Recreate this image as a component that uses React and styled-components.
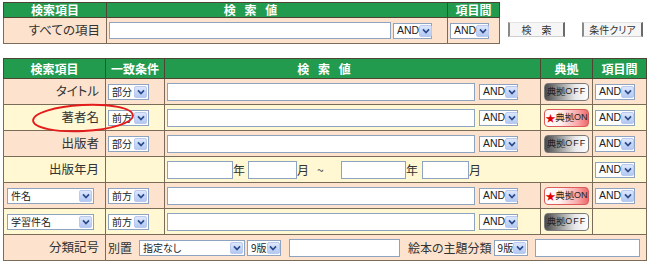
import React from 'react';
import styled, { createGlobalStyle } from 'styled-components';

const GlobalStyle = createGlobalStyle`
  html, body {
    margin: 0;
    padding: 0;
    background: #fff;
  }
  body {
    font-family: "Noto Sans CJK JP", "Liberation Sans", sans-serif;
    font-feature-settings: "palt";
    color: #333;
  }
`;

const Page = styled.div`
  position: relative;
  width: 650px;
  padding: 2px 0 0 3px;
  box-sizing: border-box;
`;

const TopRow = styled.div`
  display: flex;
  align-items: flex-start;
  margin-bottom: 14px;
`;

const Buttons = styled.div`
  display: flex;
  gap: 17px;
  margin: 20px 0 0 8px;
`;

const FlatButton = styled.div`
  width: ${p => p.$w}px;
  height: 15px;
  box-sizing: border-box;
  display: flex;
  align-items: center;
  justify-content: center;
  background: #f6f6f6;
  border-left: 2px solid #8a8a8a;
  border-right: 2px solid #6a6a6a;
  border-top: 1px solid #e4e4e4;
  border-bottom: 1px solid #cfcfcf;
  font-size: 10px;
  color: #333;
  white-space: pre;
  letter-spacing: ${p => p.$ls || 0}px;
  text-indent: ${p => p.$ls || 0}px;
`;

const Table = styled.table`
  border-collapse: collapse;
  table-layout: fixed;
  width: ${p => p.$w}px;
  border: 1px solid #4e4434;
`;

const Col = styled.col`
  width: ${p => p.$w}px;
`;

const Head = styled.th`
  background: #239b4f;
  color: #fff;
  font-size: 12px;
  font-weight: bold;
  height: ${p => p.$h}px;
  padding: 0 ${p => p.$pr || 0}px 0 0;
  border: 1px solid #4e4434;
  text-align: center;
  letter-spacing: ${p => p.$ls || 0}px;
  white-space: pre;
  line-height: 1;
`;

const Cell = styled.td`
  background: ${p => (p.$alt ? '#fff8d3' : '#fde3cd')};
  border: 1px solid #7a6c58;
  height: ${p => p.$h || 25}px;
  padding: 0;
  vertical-align: middle;
`;

const Label = styled.div`
  text-align: right;
  padding-right: 6px;
  font-size: 12.5px;
  color: #333;
  line-height: 1;
  white-space: nowrap;
`;

const Line = styled.div`
  display: flex;
  align-items: center;
  gap: ${p => p.$gap ?? 4}px;
  padding-left: ${p => p.$pl ?? 2}px;
`;

const CenterLine = styled.div`
  display: flex;
  align-items: center;
  justify-content: center;
`;

const TextBox = styled.input`
  width: ${p => p.$w}px;
  height: ${p => p.$h || 18}px;
  box-sizing: border-box;
  border: 1px solid #8ea3c0;
  background: #fff;
  margin: 0;
  padding: 0;
  outline: none;
  flex-shrink: 0;
`;

const Unit = styled.span`
  font-size: 12px;
  color: #333;
  margin: ${p => p.$m || '0'};
  width: ${p => (p.$w ? `${p.$w}px` : 'auto')};
  line-height: 1;
  white-space: nowrap;
  flex-shrink: 0;
`;

const SelectBox = styled.div`
  width: ${p => p.$w}px;
  height: 16px;
  box-sizing: border-box;
  display: flex;
  align-items: center;
  justify-content: space-between;
  border: 1px solid #8ea3c0;
  background: #fff;
  padding: 0 1px 0 3px;
  flex-shrink: 0;
  margin: ${p => p.$m || '0'};
`;

const SelectText = styled.span`
  font-family: ${p => (p.$latin ? '"Liberation Sans", Arial, sans-serif' : '"Noto Sans CJK JP", sans-serif')};
  font-size: ${p => (p.$latin ? 10.5 : 10)}px;
  color: #222;
  line-height: 1;
  white-space: nowrap;
`;

const ArrowBtn = styled.span`
  width: 13px;
  height: 12px;
  box-sizing: border-box;
  display: flex;
  align-items: center;
  justify-content: center;
  border: 1px solid #b9caee;
  border-radius: 2px;
  background: linear-gradient(#dde7fc, #b3c8f2);
  flex-shrink: 0;
`;

const Authority = styled.div`
  width: 45px;
  height: 18px;
  box-sizing: border-box;
  border-radius: 4px;
  display: flex;
  align-items: center;
  justify-content: center;
  font-size: 9.5px;
  line-height: 1;
  color: #222;
  white-space: nowrap;
  letter-spacing: -0.2px;
  border: 1px solid ${p => (p.$on ? '#dc5a5a' : '#7a7a7a')};
  background: ${p =>
    p.$on
      ? 'linear-gradient(90deg, #ffffff 0%, #fff0f0 35%, #f9a9a9 75%, #ee6a6a 100%)'
      : 'linear-gradient(90deg, #4a4a4a 0%, #9a9a9a 35%, #e8e8e8 70%, #ffffff 100%)'};
`;

const Latin = styled.span`
  font-family: "Liberation Sans", Arial, sans-serif;
  font-size: 9px;
  letter-spacing: ${p => p.$ls || 0}px;
`;

const Star = styled.span`
  color: #e00000;
  font-size: 10px;
`;

const Ellipse = styled.svg`
  position: absolute;
  left: 31px;
  top: 102px;
  pointer-events: none;
`;

const Chevron = () => (
  <svg width="8" height="6" viewBox="0 0 8 6">
    <path d="M1 1.3 L4 4.5 L7 1.3" fill="none" stroke="#2b4b8c" strokeWidth="1.7" />
  </svg>
);

const Select = ({ w, latin, m, children }) => (
  <SelectBox $w={w} $m={m}>
    <SelectText $latin={latin}>{children}</SelectText>
    <ArrowBtn>
      <Chevron />
    </ArrowBtn>
  </SelectBox>
);

const AuthorityButton = ({ on }) =>
  on ? (
    <Authority $on>
      <Star>★</Star>典拠<Latin>ON</Latin>
    </Authority>
  ) : (
    <Authority>
      典拠<Latin $ls={1}>OFF</Latin>
    </Authority>
  );

const fieldRows = [
  { label: 'タイトル', match: '部分', on: false },
  { label: '著者名', match: '前方', on: true },
  { label: '出版者', match: '部分', on: false },
];

const subjectRows = [
  { field: '件名', match: '前方', on: true, alt: false, andOp: true },
  { field: '学習件名', match: '前方', on: false, alt: true, andOp: false },
];

export default function App() {
  return (
    <Page>
      <GlobalStyle />
      <TopRow>
        <Table $w={496}>
          <colgroup>
            <Col $w={103} />
            <Col $w={341} />
            <Col $w={52} />
          </colgroup>
          <thead>
            <tr>
              <Head $h={14}>検索項目</Head>
              <Head $h={14} $ls={3} $pr={50}>検 索 値</Head>
              <Head $h={14}>項目間</Head>
            </tr>
          </thead>
          <tbody>
            <tr>
              <Cell $h={25}>
                <Label>すべての項目</Label>
              </Cell>
              <Cell>
                <Line $pl={2} $gap={2}>
                  <TextBox $w={282} $h={17} readOnly />
                  <Select w={39} latin>AND</Select>
                </Line>
              </Cell>
              <Cell>
                <Line $pl={2}>
                  <Select w={39} latin>AND</Select>
                </Line>
              </Cell>
            </tr>
          </tbody>
        </Table>
        <Buttons>
          <FlatButton $w={57} $ls={4}>検 索</FlatButton>
          <FlatButton $w={61}>条件クリア</FlatButton>
        </Buttons>
      </TopRow>

      <Table $w={643}>
        <colgroup>
          <Col $w={102} />
          <Col $w={59} />
          <Col $w={376} />
          <Col $w={52} />
          <Col $w={54} />
        </colgroup>
        <thead>
          <tr>
            <Head $h={19}>検索項目</Head>
            <Head $h={19}>一致条件</Head>
            <Head $h={19} $ls={3} $pr={54}>検 索 値</Head>
            <Head $h={19}>典拠</Head>
            <Head $h={19}>項目間</Head>
          </tr>
        </thead>
        <tbody>
          {fieldRows.map((r, i) => (
            <tr key={r.label}>
              <Cell $alt={i % 2 === 1}>
                <Label>{r.label}</Label>
              </Cell>
              <Cell $alt={i % 2 === 1}>
                <Line $pl={2}>
                  <Select w={41}>{r.match}</Select>
                </Line>
              </Cell>
              <Cell $alt={i % 2 === 1}>
                <Line $pl={2} $gap={4}>
                  <TextBox $w={308} readOnly />
                  <Select w={39} latin>AND</Select>
                </Line>
              </Cell>
              <Cell $alt={i % 2 === 1}>
                <CenterLine>
                  <AuthorityButton on={r.on} />
                </CenterLine>
              </Cell>
              <Cell $alt={i % 2 === 1}>
                <Line $pl={2}>
                  <Select w={40} latin>AND</Select>
                </Line>
              </Cell>
            </tr>
          ))}
          <tr>
            <Cell $alt>
              <Label>出版年月</Label>
            </Cell>
            <Cell $alt />
            <Cell $alt colSpan={2}>
              <Line $pl={2} $gap={0}>
                <TextBox $w={66} readOnly />
                <Unit $m="0 3px 0 0">年</Unit>
                <TextBox $w={49} readOnly />
                <Unit $m="0 8px 0 0">月</Unit>
                <Unit $w={24}>~</Unit>
                <TextBox $w={65} readOnly />
                <Unit $m="0 4px 0 0">年</Unit>
                <TextBox $w={47} readOnly />
                <Unit>月</Unit>
              </Line>
            </Cell>
            <Cell $alt>
              <Line $pl={2}>
                <Select w={40} latin>AND</Select>
              </Line>
            </Cell>
          </tr>
          {subjectRows.map(r => (
            <tr key={r.field}>
              <Cell $alt={r.alt}>
                <Line $pl={3}>
                  <Select w={87}>{r.field}</Select>
                </Line>
              </Cell>
              <Cell $alt={r.alt}>
                <Line $pl={2}>
                  <Select w={41}>{r.match}</Select>
                </Line>
              </Cell>
              <Cell $alt={r.alt}>
                <Line $pl={2} $gap={4}>
                  <TextBox $w={308} readOnly />
                  <Select w={39} latin>AND</Select>
                </Line>
              </Cell>
              <Cell $alt={r.alt}>
                <CenterLine>
                  <AuthorityButton on={r.on} />
                </CenterLine>
              </Cell>
              <Cell $alt={r.alt}>
                {r.andOp && (
                  <Line $pl={2}>
                    <Select w={40} latin>AND</Select>
                  </Line>
                )}
              </Cell>
            </tr>
          ))}
          <tr>
            <Cell>
              <Label>分類記号</Label>
            </Cell>
            <Cell colSpan={4}>
              <Line $pl={2} $gap={0}>
                <Unit $m="0 7px 0 0">別置</Unit>
                <Select w={106} m="0 2px 0 0">指定なし</Select>
                <Select w={34} m="0 8px 0 0">9版</Select>
                <TextBox $w={111} readOnly />
                <Unit $m="0 2px 0 8px">絵本の主題分類</Unit>
                <Select w={34} m="0 7px 0 0">9版</Select>
                <TextBox $w={105} readOnly />
              </Line>
            </Cell>
          </tr>
        </tbody>
      </Table>

      <Ellipse width="106" height="32" viewBox="0 0 106 32">
        <ellipse
          cx="52"
          cy="16"
          rx="50"
          ry="13"
          fill="none"
          stroke="#e31b1b"
          strokeWidth="1.8"
          transform="rotate(-3 52 16)"
        />
      </Ellipse>
    </Page>
  );
}
